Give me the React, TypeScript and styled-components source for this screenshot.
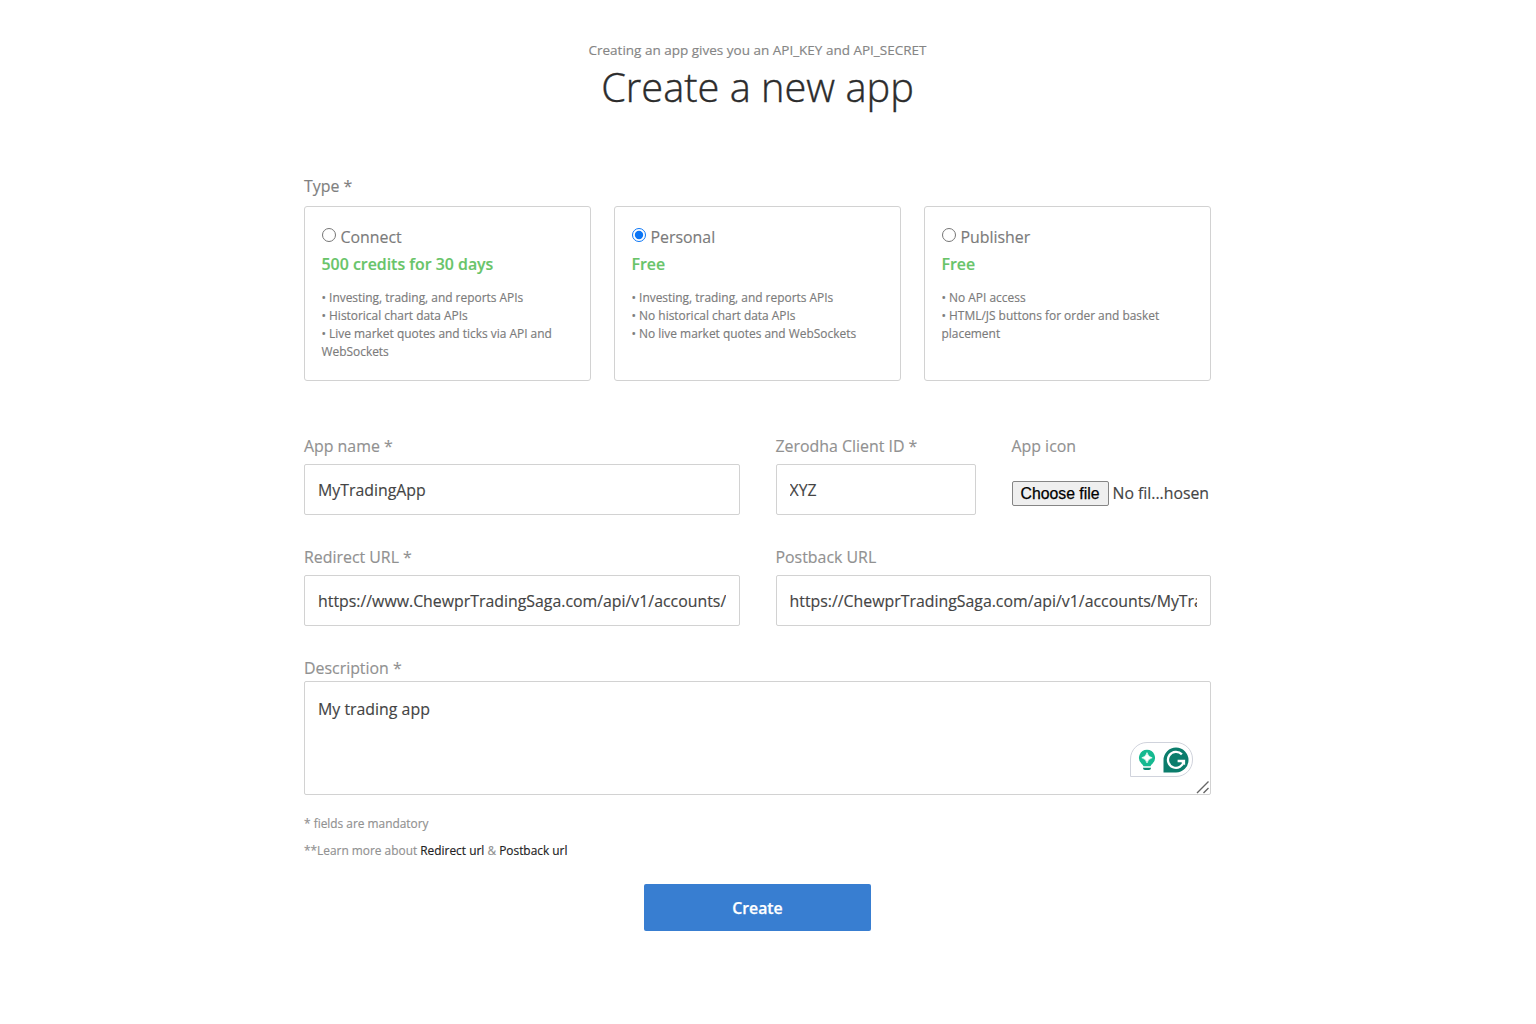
import React from "react";
import styled, { createGlobalStyle } from "styled-components";

const Global = createGlobalStyle`
  *, *::before, *::after { box-sizing: border-box; }
  body {
    margin: 0;
    background: #fff;
    color: #444;
    font-family: "Open Sans", "Noto Sans", sans-serif;
    font-size: 15.9px;
    -webkit-text-stroke: 0.15px currentColor;
  }
`;

const Page = styled.main`
  min-height: 1024px;
  padding: 40px 21px 0 0;
  overflow: hidden;
`;

const Container = styled.form`
  width: 907px;
  margin: 0 auto;
`;

const Header = styled.header`
  display: flex;
  flex-direction: column;
  align-items: center;
  height: 135px;
`;

const Eyebrow = styled.p`
  margin: 0;
  font-size: 13.5px;
  line-height: 20px;
  color: #858585;
`;

const Title = styled.h1`
  margin: 0;
  font-size: 39.75px;
  font-weight: 300;
  line-height: 54px;
  color: #2c2c2c;
  -webkit-text-stroke: 0.4px currentColor;
`;

const Label = styled.label<{ $dark?: boolean; $height?: number }>`
  display: block;
  height: ${(p) => p.$height ?? 31}px;
  font-size: 15.9px;
  line-height: 22px;
  color: ${(p) => (p.$dark ? "#808080" : "#919191")};
`;

const Plans = styled.section`
  display: grid;
  grid-template-columns: repeat(3, 1fr);
  gap: 23px;
  margin-bottom: 54px;
`;

const Plan = styled.label`
  display: block;
  height: 175px;
  padding: 18px 17px 0 16.5px;
  border: 1px solid #d2d2d2;
  border-radius: 3px;
  color: #7b7b7b;
`;

const PlanName = styled.span`
  display: flex;
  gap: 5px;
  height: 24px;
  line-height: 24px;
`;

const Radio = styled.input`
  width: 14px;
  height: 14px;
  margin: 3px 0 0;
  accent-color: #0b75f5;
`;

const Price = styled.strong`
  display: block;
  margin-top: 3px;
  font-size: 15.9px;
  font-weight: 600;
  line-height: 24px;
  color: #68c469;
`;

const Features = styled.span`
  display: block;
  margin-top: 13px;
  font-size: 11.93px;
  line-height: 17.85px;
`;

const Feature = styled.span`
  display: block;
`;

const FieldRow = styled.div<{ $columns: string }>`
  display: grid;
  grid-template-columns: ${(p) => p.$columns};
  gap: 36px;
`;

const Field = styled.div`
  height: 111px;
  min-width: 0;
`;

const TextInput = styled.input`
  display: block;
  width: 100%;
  height: 51px;
  padding: 0 13px;
  border: 1px solid #d2d2d2;
  border-radius: 2px;
  outline: none;
  background: #fff;
  color: #444;
  font: 15.87px "Open Sans", sans-serif;
  -webkit-text-stroke: 0.15px currentColor;
`;

const FileRow = styled.div`
  display: flex;
  align-items: center;
  gap: 4px;
  height: 25px;
  margin-top: 16px;
  white-space: nowrap;
`;

const FileButton = styled.button`
  width: 97px;
  height: 25px;
  padding: 1px 0 0;
  border: 1px solid #858585;
  border-radius: 2px;
  background: #efefef;
  color: #000;
  font: 15.8px "Liberation Sans", Arial, sans-serif;
  -webkit-text-stroke: 0.25px #000;
`;

const FileName = styled.span`
  font-size: 15.8px;
  line-height: 22px;
  margin-bottom: 2px;
`;

const AreaWrap = styled.div`
  position: relative;
  height: 114px;
`;

const TextArea = styled.textarea`
  display: block;
  width: 100%;
  height: 114px;
  padding: 16px 13px;
  border: 1px solid #d2d2d2;
  border-radius: 2px;
  outline: none;
  resize: none;
  color: #444;
  font: 15.9px/22px "Open Sans", sans-serif;
  -webkit-text-stroke: 0.15px currentColor;
`;

const Assistant = styled.div`
  position: absolute;
  right: 18px;
  bottom: 18px;
  display: flex;
  align-items: center;
  width: 63px;
  height: 35px;
  padding-left: 7px;
  gap: 7px;
  border: 1px solid #d0d3dc;
  border-radius: 17px 17px 17px 0;
  background: #fff;
`;

const Grip = styled.svg`
  position: absolute;
  right: 1px;
  bottom: 1px;
`;

const Notes = styled.div`
  padding-top: 18px;
  font-size: 11.9px;
  line-height: 20px;
  color: #919191;
`;

const Note = styled.p`
  margin: 0 0 7px;
`;

const NoteLink = styled.a`
  color: #222;
  text-decoration: none;
`;

const Submit = styled.button`
  display: block;
  width: 227px;
  height: 47px;
  margin: 24px auto 0;
  padding: 0;
  border: 0;
  border-radius: 2px;
  background: #387ed1;
  color: #fff;
  font: 600 15.8px "Open Sans", sans-serif;
  -webkit-text-stroke: 0.25px currentColor;
`;

const plans = [
  {
    name: "Connect",
    price: "500 credits for 30 days",
    features: [
      "Investing, trading, and reports APIs",
      "Historical chart data APIs",
      "Live market quotes and ticks via API and WebSockets",
    ],
  },
  {
    name: "Personal",
    price: "Free",
    features: [
      "Investing, trading, and reports APIs",
      "No historical chart data APIs",
      "No live market quotes and WebSockets",
    ],
  },
  {
    name: "Publisher",
    price: "Free",
    features: ["No API access", "HTML/JS buttons for order and basket placement"],
  },
];

const BulbIcon = () => (
  <svg width="18" height="22" viewBox="0 0 18 22">
    <path d="M9 .8a8 8 0 0 0-5.600 13.700c1 .9 1.600 1.500 2.100 2.700h7c.5-1.200 1.100-1.800 2.100-2.700A8 8 0 0 0 9 .8Z" fill="#15b990" />
    <path d="M9 3.600Q10 7.800 14.200 8.800 10 9.800 9 14 8 9.800 3.800 8.800 8 7.800 9 3.600Z" fill="#fff" stroke="#fff" strokeWidth=".6" />
    <path d="M5 18.700h8v.4A2 2 0 0 1 11 21H7A2 2 0 0 1 5 19.100Z" fill="#0b8a74" />
  </svg>
);

const GrammarIcon = () => (
  <svg width="26" height="26" viewBox="0 0 26 26">
    <path d="M13 .5A12.500 12.500 0 1 1 13 25.500H.5V13A12.500 12.500 0 0 1 13 .5Z" fill="#0b7d6c" />
    <path d="M18.900 7.400A8 8 0 1 0 20.900 14H14.600" fill="none" stroke="#fff" strokeWidth="2.300" />
    <path d="M17 14H22.100V18.300Z" fill="#fff" />
  </svg>
);

export default function App() {
  return (
    <>
      <Global />
      <Page>
        <Container onSubmit={(e) => e.preventDefault()}>
          <Header>
            <Eyebrow>Creating an app gives you an API_KEY and API_SECRET</Eyebrow>
            <Title>Create a new app</Title>
          </Header>

          <Label as="div" $dark>Type *</Label>
          <Plans>
            {plans.map((plan) => (
              <Plan key={plan.name}>
                <PlanName>
                  <Radio type="radio" name="plan" defaultChecked={plan.name === "Personal"} />
                  {plan.name}
                </PlanName>
                <Price>{plan.price}</Price>
                <Features>
                  {plan.features.map((f) => (
                    <Feature key={f}>{`• ${f}`}</Feature>
                  ))}
                </Features>
              </Plan>
            ))}
          </Plans>

          <FieldRow $columns="435.5px 200px 199px">
            <Field>
              <Label htmlFor="name" $height={29}>App name *</Label>
              <TextInput id="name" defaultValue="MyTradingApp" />
            </Field>
            <Field>
              <Label htmlFor="client" $height={29}>Zerodha Client ID *</Label>
              <TextInput id="client" defaultValue="XYZ" />
            </Field>
            <Field>
              <Label as="div" $height={30}>App icon</Label>
              <FileRow>
                <FileButton type="button">Choose file</FileButton>
                <FileName>No fil...hosen</FileName>
              </FileRow>
            </Field>
          </FieldRow>

          <FieldRow $columns="435.5px 435px">
            <Field>
              <Label htmlFor="redirect" $height={29}>Redirect URL *</Label>
              <TextInput id="redirect" spellCheck={false} defaultValue="https://www.ChewprTradingSaga.com/api/v1/accounts/" />
            </Field>
            <Field>
              <Label htmlFor="postback" $height={29}>Postback URL</Label>
              <TextInput id="postback" spellCheck={false} defaultValue="https://ChewprTradingSaga.com/api/v1/accounts/MyTradingApp" />
            </Field>
          </FieldRow>

          <Label htmlFor="description" $height={24}>Description *</Label>
          <AreaWrap>
            <TextArea id="description" defaultValue="My trading app" />
            <Assistant>
              <BulbIcon />
              <GrammarIcon />
            </Assistant>
            <Grip width="14" height="14" viewBox="0 0 14 14" fill="none" stroke="#666" strokeWidth="1.400">
              <path d="M1 13 12.500 1.500M7.500 13 12.500 8" />
            </Grip>
          </AreaWrap>

          <Notes>
            <Note>* fields are mandatory</Note>
            <Note>
              **Learn more about <NoteLink href="#redirect">Redirect url</NoteLink> &amp;{" "}
              <NoteLink href="#postback">Postback url</NoteLink>
            </Note>
          </Notes>

          <Submit type="submit">Create</Submit>
        </Container>
      </Page>
    </>
  );
}
